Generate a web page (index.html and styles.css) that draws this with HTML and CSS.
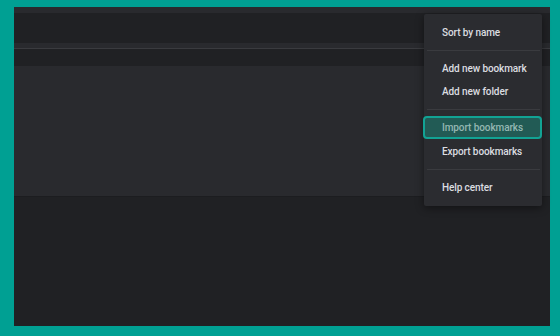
FILE: index.html
```html
<!DOCTYPE html>
<html lang="en">
<head>
  <meta charset="UTF-8">
  <title>Bookmarks</title>
  <link rel="stylesheet" href="styles.css">
</head>
<body>

  <div class="window">
    <div class="top-strip"></div>
    <div class="header"></div>
    <div class="toolbar"></div>
    <div class="gap"></div>
    <div class="panel"></div>

    <div class="menu">
      <div class="menu-item">Sort by name</div>
      <div class="divider"></div>
      <div class="menu-item">Add new bookmark</div>
      <div class="menu-item">Add new folder</div>
      <div class="divider"></div>
      <div class="menu-item active">Import bookmarks</div>
      <div class="menu-item">Export bookmarks</div>
      <div class="divider"></div>
      <div class="menu-item">Help center</div>
    </div>
  </div>

</body>
</html>
```

FILE: styles.css
```css
:root {
  --frame-color: #00a093;
  --bg-color: #202124;
  --panel-color: #292a2e;
  --menu-color: #2b2c30;
  --line-color: #3a3b3f;
  --text-color: #dcdde0;
}

body {
  margin: 0;
  background-color: var(--frame-color);
  font-family: Roboto, "Liberation Sans", sans-serif;
}

.window {
  position: relative;
  margin: 7px 10px 0 14px;
  height: 319px;
  background-color: var(--bg-color);
  display: flex;
  flex-direction: column;
}

.top-strip {
  height: 6px;
  background-color: var(--panel-color);
}

.header {
  height: 30px;
}

.toolbar {
  height: 5px;
  background-color: var(--panel-color);
  border-bottom: 1px solid var(--line-color);
}

.gap {
  height: 17px;
}

.panel {
  height: 130px;
  background-color: var(--panel-color);
  border-bottom: 1px solid #1c1d20;
}

/* dropdown */
.menu {
  position: absolute;
  top: 7px;
  left: 410px;
  width: 118px;
  padding: 7px 0 7px;
  background-color: var(--menu-color);
  border-radius: 2px;
  box-shadow: 0 2px 8px rgba(0, 0, 0, 0.45);
}

.menu-item {
  height: 23px;
  line-height: 23px;
  padding-left: 18px;
  font-size: 10px;
  font-weight: 500;
  letter-spacing: -0.1px;
  color: var(--text-color);
  white-space: nowrap;
}

.menu-item.active {
  box-sizing: border-box;
  height: 23px;
  margin: 0 0 1px -1px;
  padding-left: 17px;
  line-height: 19px;
  border: 2px solid #12a394;
  border-radius: 4px;
  background-color: #225b55;
  color: #94b7b2;
}

.divider {
  height: 1px;
  margin: 6px 2px 6px 3px;
  background-color: var(--line-color);
}
```
